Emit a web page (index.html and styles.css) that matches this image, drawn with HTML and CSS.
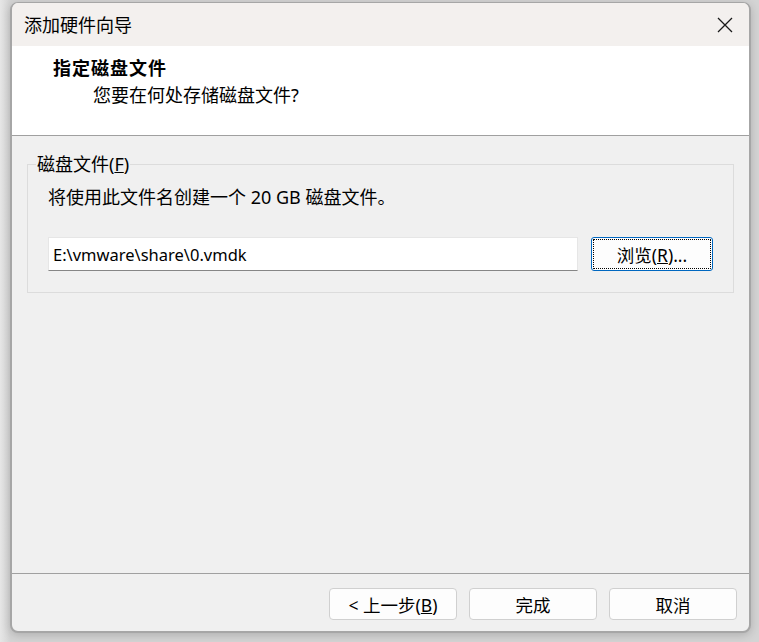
FILE: index.html
```html
<!DOCTYPE html>
<html lang="zh-CN">
<head>
    <meta charset="UTF-8">
    <meta name="viewport" content="width=device-width, initial-scale=1.0">
    <title>添加硬件向导</title>
    <link rel="stylesheet" href="styles.css">
</head>
<body>
    <div class="wizard">
        <div class="titlebar">
            <span class="title">添加硬件向导</span>
            <button class="close" aria-label="关闭">
                <svg width="16" height="16" viewBox="0 0 16 16"><path d="M1 1L15 15M15 1L1 15" stroke="#1a1a1a" stroke-width="1.3" fill="none"/></svg>
            </button>
        </div>

        <div class="header">
            <h1>指定磁盘文件</h1>
            <p>您要在何处存储磁盘文件?</p>
        </div>

        <div class="content">
            <fieldset class="group">
                <legend>磁盘文件(<u>F</u>)</legend>
                <p class="hint">将使用此文件名创建一个 20 GB 磁盘文件。</p>
                <div class="file-row">
                    <input class="path" type="text" value="E:\vmware\share\0.vmdk">
                    <button class="btn browse">浏览(<u>R</u>)...</button>
                </div>
            </fieldset>
        </div>

        <div class="footer">
            <button class="btn">&lt; 上一步(<u>B</u>)</button>
            <button class="btn">完成</button>
            <button class="btn">取消</button>
        </div>
    </div>
</body>
</html>
```

FILE: styles.css
```css
:root {
    --face: #f0f0f0;
    --title: #f3f0ee;
    --edge: #a0a0a0;
    --text: #000;
    --ui-font: "Noto Sans", "Noto Sans CJK SC", sans-serif;
}
body {
    margin: 0;
    height: 642px;
    overflow: hidden;
    background: linear-gradient(to right, #e6e6e6, #d4d4d4 10px, #d4d4d4);
    font-family: var(--ui-font);
    color: var(--text);
}
.wizard {
    box-sizing: border-box;
    margin: 2px 0 0 10px;
    width: 741px;
    height: 631px;
    background: var(--face);
    border: solid #a6a6a6;
    border-width: 1px 2px 2px 2px;
    border-radius: 8px;
    overflow: hidden;
    display: flex;
    flex-direction: column;
    box-shadow: 0 2px 10px rgba(0, 0, 0, 0.18);
}
.titlebar {
    height: 43px;
    flex: none;
    background: var(--title);
    display: flex;
    align-items: center;
    justify-content: space-between;
    padding: 0 16px 0 12px;
}
.title {
    font-size: 18px;
    line-height: 24px;
}
.close {
    border: none;
    background: none;
    padding: 0;
    width: 16px;
    height: 16px;
    display: flex;
}
.header {
    flex: none;
    height: 89px;
    box-sizing: content-box;
    background: #fff;
    border-bottom: 1px solid var(--edge);
    padding: 0 0 0 41px;
}
.header h1 {
    margin: 10px 0 0;
    font-size: 18px;
    line-height: 24px;
    font-weight: bold;
    letter-spacing: 1px;
}
.header p {
    margin: 3px 0 0 40px;
    font-size: 18px;
    line-height: 24px;
}
.content {
    flex: 1;
    padding: 16px 15px 0;
}
.group {
    margin: 0;
    padding: 0 20px 21px 20px;
    border: 1px solid #dcdcdc;
}
.group legend {
    margin-left: -12px;
    padding: 0 1px;
    font-size: 18px;
    line-height: 24px;
}
.hint {
    margin: 9px 0 0;
    font-size: 18px;
    line-height: 24px;
}
.file-row {
    display: flex;
    gap: 13px;
    margin-top: 28px;
}
.path {
    flex: 1;
    box-sizing: border-box;
    height: 34px;
    margin: 0;
    padding: 0 4px;
    border: 1px solid #e6e6e6;
    border-bottom-color: #868686;
    background: #fff;
    font-family: var(--ui-font);
    font-size: 16.5px;
    color: var(--text);
}
.btn {
    box-sizing: border-box;
    width: 128px;
    height: 32px;
    padding: 0;
    background: #fdfdfd;
    border: 1px solid #d0d0d0;
    border-radius: 4px;
    font-family: var(--ui-font);
    font-size: 17.5px;
    color: var(--text);
}
.browse {
    width: 122px;
    height: 34px;
    border-color: #0067c0;
    border-radius: 3px;
    outline: 1px dotted #000;
    outline-offset: -3px;
}
.footer {
    flex: none;
    height: 58px;
    border-top: 1px solid var(--edge);
    display: flex;
    justify-content: flex-end;
    gap: 12px;
    padding: 14px 12px 0 0;
    box-sizing: border-box;
}
```
